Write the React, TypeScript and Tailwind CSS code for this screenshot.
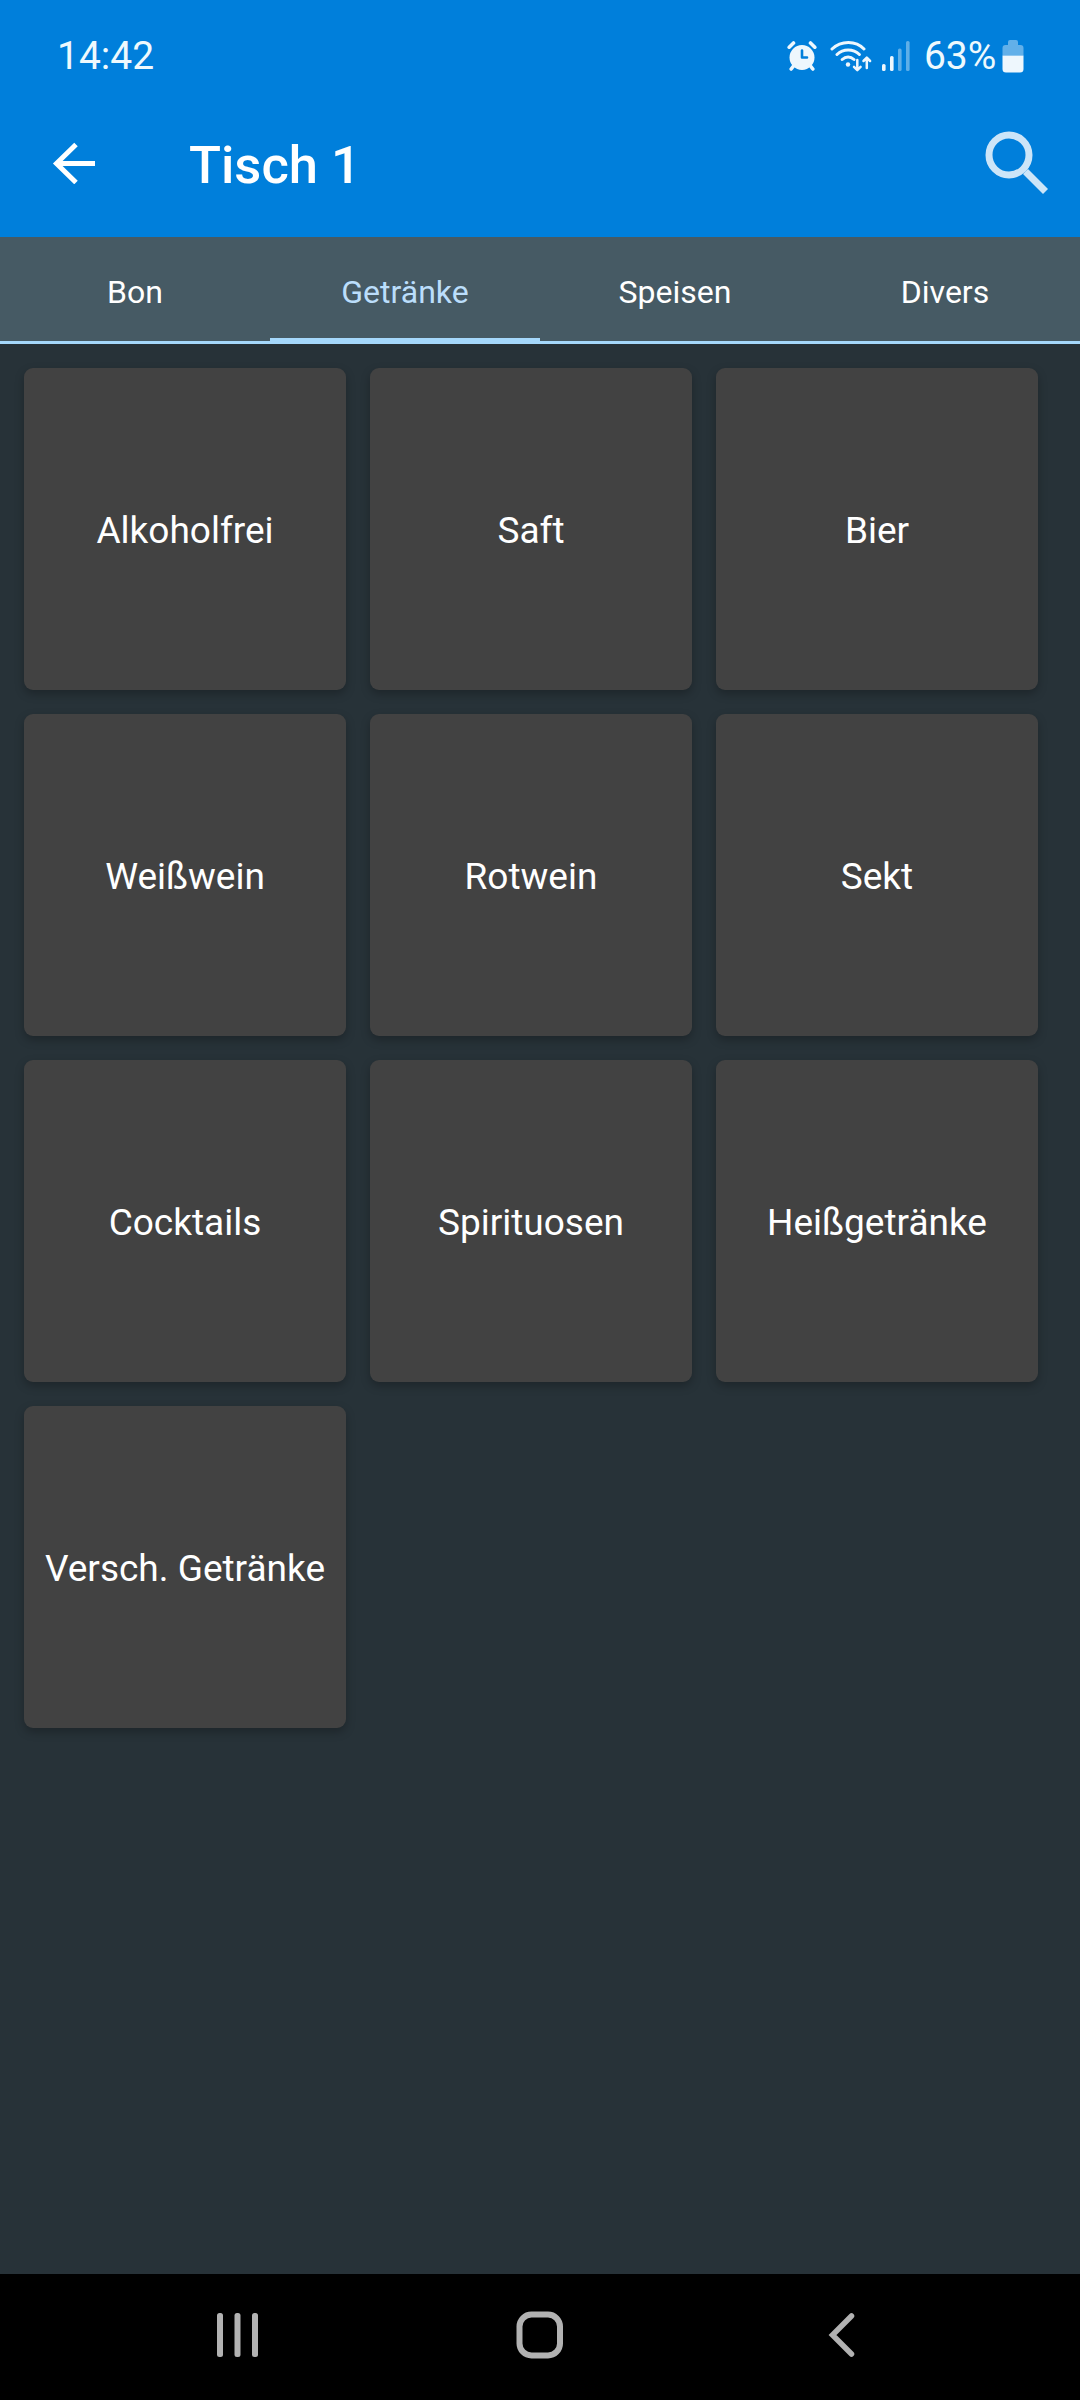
import clsx from "clsx";

const tabs = ["Bon", "Getränke", "Speisen", "Divers"];

const categories = [
  "Alkoholfrei",
  "Saft",
  "Bier",
  "Weißwein",
  "Rotwein",
  "Sekt",
  "Cocktails",
  "Spirituosen",
  "Heißgetränke",
  "Versch. Getränke",
];

function AlarmIcon() {
  return (
    <svg width="30" height="30" viewBox="0 0 30 30" fill="none">
      <circle cx="15" cy="16.5" r="12.5" fill="#eef7fd" />
      <path d="M2.2 6.2 6.5 2M27.8 6.2 23.5 2M6.5 25 4.2 28M23.5 25l2.3 3" stroke="#eef7fd" strokeWidth="3.6" strokeLinecap="round" />
      <path d="M15 9.5v7h5" stroke="#007fdb" strokeWidth="2.6" strokeLinecap="round" strokeLinejoin="round" />
    </svg>
  );
}

function WifiIcon() {
  return (
    <svg width="42" height="32" viewBox="0 0 42 32" fill="none" stroke="#eef7fd" strokeLinecap="round">
      <path d="M2 9C11 .3 26 .3 34 9M7 14.5c6.2-6 16.2-6 22.4 0M12.2 19.5c3.6-3.2 8.2-3.2 11.8 0" strokeWidth="3" />
      <circle cx="18" cy="24.5" r="2.2" fill="#eef7fd" stroke="none" />
      <path d="M27.3 20v9.8M24 26.8l3.3 3.3 3.3-3.3M36.8 28V18M33.5 21l3.3-3.3 3.3 3.3" strokeWidth="2.5" strokeLinejoin="round" />
    </svg>
  );
}

function SignalIcon() {
  return (
    <svg width="28" height="30" viewBox="0 0 28 30" fill="#eef7fd">
      <rect x="0" y="23" width="3.6" height="7" rx="1.6" />
      <rect x="8" y="15" width="3.6" height="15" rx="1.6" />
      <rect x="16" y="7.5" width="3.6" height="22.5" rx="1.6" opacity="0.4" />
      <rect x="24" y="0" width="3.6" height="30" rx="1.6" opacity="0.4" />
    </svg>
  );
}

function BatteryIcon() {
  return (
    <svg width="22" height="33" viewBox="0 0 22 33">
      <path d="M.5 15.5V8q0-3 3-3H6V2q0-2 2-2h6q2 0 2 2v3h2.5q3 0 3 3v7.5z" fill="#62b0e9" />
      <path d="M.5 15.5h21V29q0 3.5-3.5 3.5H4Q.5 32.5.5 29z" fill="#eef7fd" />
    </svg>
  );
}

function StatusBar() {
  return (
    <div className="flex h-[110px] items-center justify-between pl-[57px] pr-[56px] pt-0.5 text-[39px] leading-none text-[#eef9fd]">
      <span>14:42</span>
      <div className="flex items-center">
        <AlarmIcon />
        <div className="ml-[13px]">
          <WifiIcon />
        </div>
        <div className="ml-[10px]">
          <SignalIcon />
        </div>
        <span className="ml-[14px] w-[78px] tracking-[-0.1px]">63%</span>
        <BatteryIcon />
      </div>
    </div>
  );
}

function Toolbar() {
  return (
    <div className="flex h-[127px] items-center pb-[21px]">
      <svg className="ml-[52px]" width="43" height="42" viewBox="0 0 43 42" fill="none" stroke="white" strokeWidth="5">
        <path d="M43 21.500H4M24 2.500 4.500 21.500 24 40.500" />
      </svg>
      <h1 className="ml-[94px] pt-1 text-[52.5px] font-medium leading-none">Tisch 1</h1>
      <svg className="ml-auto mr-[31px]" width="64" height="64" viewBox="0 0 64 64" fill="none" stroke="#cce5f8">
        <circle cx="24" cy="24" r="20" strokeWidth="7" />
        <path d="M40.5 40.5l20 20" strokeWidth="7" />
      </svg>
    </div>
  );
}

function TabBar({ active }: { active: string }) {
  return (
    <nav className="grid h-[107px] grid-cols-4 bg-[#465a64] text-[32px] leading-none">
      {tabs.map((tab) => (
        <div
          key={tab}
          className={clsx(
            "flex flex-col items-center justify-between border-[#a5d8fb]",
            tab === active ? "border-b-[6px] text-[#bbdefb]" : "border-b-[3px]"
          )}
        >
          <span className="mt-[39px]">{tab}</span>
        </div>
      ))}
    </nav>
  );
}

function NavigationBar() {
  return (
    <div className="flex h-[126px] items-center bg-black pb-1 pl-[217px]">
      <svg width="41" height="44" viewBox="0 0 41 44" fill="#b2b2b2">
        <rect x="0" width="6" height="44" rx="2.5" />
        <rect x="17.5" width="6" height="44" rx="2.5" />
        <rect x="35" width="6" height="44" rx="2.5" />
      </svg>
      <svg className="ml-[258px]" width="48" height="48" viewBox="0 0 48 48" fill="none" stroke="#b2b2b2" strokeWidth="6">
        <rect x="3.5" y="3.5" width="40.5" height="41" rx="12" />
      </svg>
      <svg className="ml-[264px]" width="27" height="44" viewBox="0 0 27 44" fill="none" stroke="#b2b2b2" strokeWidth="5.5" strokeLinecap="round">
        <path d="M23.5 3 4.5 22l19 19" />
      </svg>
    </div>
  );
}

export default function App() {
  return (
    <div className="flex h-[2400px] w-[1080px] flex-col bg-[#273238] font-[Roboto,sans-serif] text-white">
      <header className="bg-[#007fdb]">
        <StatusBar />
        <Toolbar />
      </header>
      <TabBar active="Getränke" />
      <main className="grid flex-1 grid-cols-[repeat(3,322px)] content-start gap-6 p-6">
        {categories.map((name) => (
          <button
            key={name}
            className="flex h-[322px] items-center justify-center rounded-[9px] bg-[#424242] pt-[3px] text-[37px] leading-none shadow-[0_4px_10px_rgba(0,0,0,0.25)]"
          >
            {name}
          </button>
        ))}
      </main>
      <NavigationBar />
    </div>
  );
}
